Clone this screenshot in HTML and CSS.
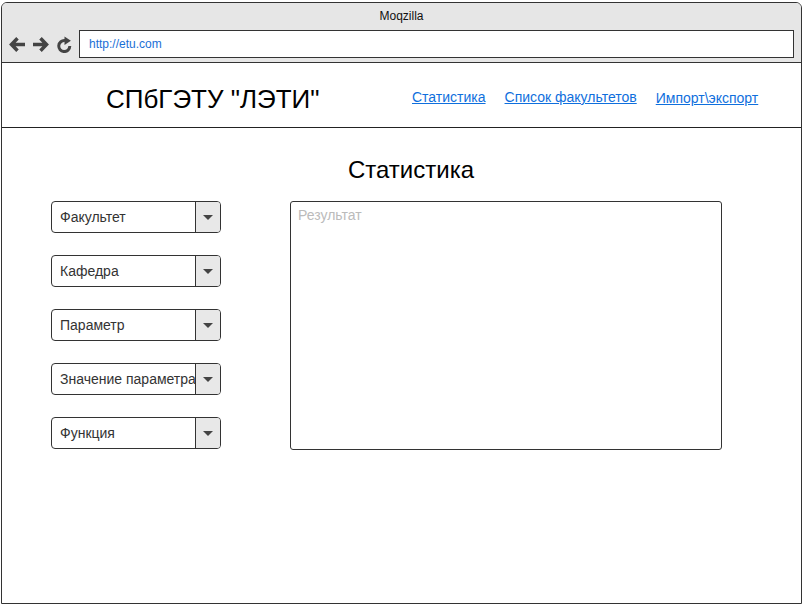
FILE: index.html
```html
<!DOCTYPE html>
<html lang="ru">
<head>
<meta charset="utf-8">
<title>Moqzilla</title>
<link rel="stylesheet" href="styles.css">
</head>
<body>
<div class="window">
  <div class="chrome">
    <div class="title">Moqzilla</div>
    <div class="navbar">
      <div class="navicons">
        <svg class="ico" width="18" height="17" viewBox="0 0 18 17"><path d="M17 8.5H3.5M9.5 2.3L3.5 8.5l6 6.2" fill="none" stroke="#444" stroke-width="3.5"/></svg>
        <svg class="ico" width="18" height="17" viewBox="0 0 18 17"><path d="M1 8.5h13.5M8.5 2.3l6 6.2-6 6.2" fill="none" stroke="#444" stroke-width="3.5"/></svg>
        <svg class="ico" width="17" height="17" viewBox="0 0 16 16"><path d="M13 9.5A5.2 5.2 0 1 1 8.5 4.3" fill="none" stroke="#444" stroke-width="2.8"/><path d="M8 0.5L14 4.5 8 8.5z" fill="#444"/></svg>
      </div>
      <div class="url">http://etu.com</div>
    </div>
  </div>
  <header class="site-header">
    <div class="logo">СПбГЭТУ "ЛЭТИ"</div>
    <nav class="links">
      <a href="#">Статистика</a>
      <a href="#">Список факультетов</a>
      <a href="#" class="low">Импорт\экспорт</a>
    </nav>
  </header>
  <main class="content">
    <h1 class="page-title">Статистика</h1>
    <div class="columns">
      <div class="filters">
        <div class="select"><span class="label">Факультет</span><span class="arrow"></span></div>
        <div class="select"><span class="label">Кафедра</span><span class="arrow"></span></div>
        <div class="select"><span class="label">Параметр</span><span class="arrow"></span></div>
        <div class="select"><span class="label">Значение параметра</span><span class="arrow"></span></div>
        <div class="select"><span class="label">Функция</span><span class="arrow"></span></div>
      </div>
      <div class="result">Результат</div>
    </div>
  </main>
</div>
</body>
</html>
```
FILE: styles.css
```css
* { box-sizing: border-box; }
html, body { margin: 0; padding: 0; background: #fff; }
body { font-family: "Liberation Sans", Arial, sans-serif; color: #000; }

.window {
  margin: 2px 0 0 1px;
  width: 801px;
  height: 602px;
  border: 1px solid #333;
  border-radius: 6px 6px 0 0;
  display: flex;
  flex-direction: column;
  overflow: hidden;
}

.chrome {
  background: #e6e6e6;
  border-bottom: 1px solid #333;
  height: 60px;
  display: flex;
  flex-direction: column;
}
.title {
  text-align: center;
  font-size: 12px;
  line-height: 14px;
  padding-top: 6px;
  color: #111;
}
.navbar {
  display: flex;
  align-items: center;
  padding: 7px 7px 0 6px;
}
.navicons {
  display: flex;
  align-items: center;
  gap: 6px;
  width: 71px;
}
.ico { display: block; }
.url {
  flex: 1;
  height: 28px;
  background: #fff;
  border: 1px solid #333;
  font-size: 12px;
  line-height: 26px;
  padding-left: 9px;
  color: #1a6fd6;
}

.site-header {
  height: 65px;
  border-bottom: 1px solid #222;
  display: flex;
  align-items: center;
  padding-left: 104px;
}
.logo {
  font-size: 26px;
  width: 306px;
  padding-top: 8px;
}
.links {
  display: flex;
  gap: 19px;
  font-size: 14px;
  padding-top: 4px;
}
.links a { color: #0f6fdd; text-decoration: underline; }
.links a.low { position: relative; top: 1px; }

.content { padding: 28px 0 0 49px; }
.page-title {
  margin: 0 0 17px;
  font-weight: normal;
  font-size: 24px;
  line-height: 28px;
  text-align: center;
  padding-right: 30px;
}
.columns { display: flex; gap: 69px; }
.filters { display: flex; flex-direction: column; gap: 22px; width: 170px; }
.select {
  height: 32px;
  border: 1px solid #333;
  border-radius: 4px;
  display: flex;
  overflow: hidden;
}
.label {
  flex: 1;
  font-size: 14px;
  color: #333;
  padding-left: 8px;
  line-height: 30px;
  white-space: nowrap;
  overflow: hidden;
}
.arrow {
  width: 25px;
  background: #e8e8e8;
  border-left: 1px solid #333;
  display: flex;
  align-items: center;
  justify-content: center;
}
.arrow::after {
  content: "";
  border-left: 5px solid transparent;
  border-right: 5px solid transparent;
  border-top: 5px solid #444;
}
.result {
  width: 432px;
  height: 249px;
  border: 1px solid #333;
  border-radius: 3px;
  font-size: 14px;
  color: #bbb;
  padding: 5px 7px;
}
```
